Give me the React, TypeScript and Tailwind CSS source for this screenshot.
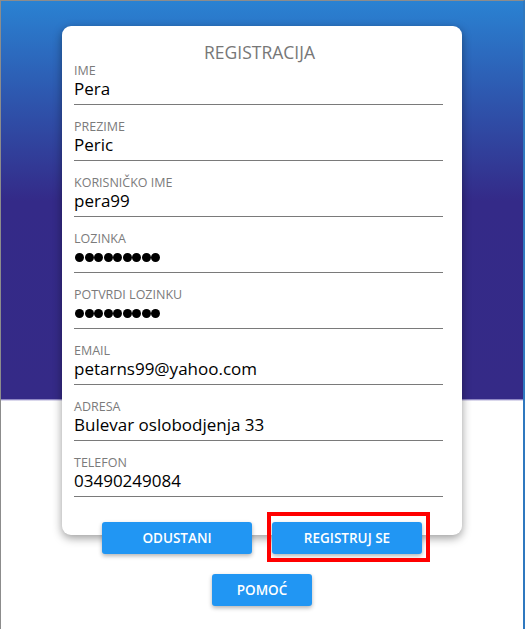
import React from 'react';

interface Field {
  label: string;
  value: string;
  password?: boolean;
}

const fields: Field[] = [
  { label: 'IME', value: 'Pera' },
  { label: 'PREZIME', value: 'Peric' },
  { label: 'KORISNIČKO IME', value: 'pera99' },
  { label: 'LOZINKA', value: '12345678', password: true },
  { label: 'POTVRDI LOZINKU', value: '12345678', password: true },
  { label: 'EMAIL', value: 'petarns99@yahoo.com' },
  { label: 'ADRESA', value: 'Bulevar oslobodjenja 33' },
  { label: 'TELEFON', value: '03490249084' },
];

function FormField({ field }: { field: Field }) {
  return (
    <div className="mt-[15px] first:mt-0 border-b border-[#7a7a7a] pb-[4px]">
      <div className="h-[14px] text-[12.5px] leading-[14px] text-[#7b7b7b]">{field.label}</div>
      <div className="h-[22px] text-[17px] leading-[22px] text-black">
        {field.password ? (
          <div className="flex items-center h-full gap-[0.5px] pl-[1px]">
            {Array.from({ length: 9 }).map((_, i) => (
              <span key={i} className="w-[9px] h-[9px] rounded-full bg-black" />
            ))}
          </div>
        ) : (
          field.value
        )}
      </div>
    </div>
  );
}

export default function App() {
  return (
    <div
      className="min-h-[629px] w-[525px] border-t border-l border-[#8c8c8c] border-r-2 border-r-[#2f78bf] bg-[linear-gradient(180deg,#2a82d2_0px,#2e55ad_100px,#342a88_200px,#352a87_398px,#6a5fb0_398px,#ffffff_400px)] font-['Open_Sans',sans-serif]"
    >
      <div className="mx-auto mt-[25px] w-[400px] rounded-[9px] bg-white pl-[12px] pr-[19px] pt-[15px] pb-[38px] shadow-[0_3px_10px_rgba(0,0,0,0.4)]">
        <h1 className="text-center text-[17.5px] leading-[22px] text-[#777777] pl-[2px]">REGISTRACIJA</h1>
        <div className="mt-[1px]">
          {fields.map((f) => (
            <FormField key={f.label} field={f} />
          ))}
        </div>
      </div>

      <div className="mt-[-13px] flex justify-center gap-[20px]">
        <button className="w-[150px] h-[32px] rounded-[3px] bg-[#2196f3] text-white text-[13.5px] font-semibold shadow-[0_2px_4px_rgba(0,0,0,0.3)]">
          ODUSTANI
        </button>
        <div className="relative">
          <button className="w-[150px] h-[32px] rounded-[3px] bg-[#2196f3] text-white text-[13.5px] font-semibold shadow-[0_2px_4px_rgba(0,0,0,0.3)]">
            REGISTRUJ SE
          </button>
          <div className="absolute left-[-5px] top-[-10px] w-[163px] h-[50px] border-4 border-[#ff0000] pointer-events-none" />
        </div>
      </div>

      <div className="mt-[20px] flex justify-center">
        <button className="w-[100px] h-[32px] rounded-[3px] bg-[#2196f3] text-white text-[13.5px] font-semibold shadow-[0_2px_4px_rgba(0,0,0,0.3)]">
          POMOĆ
        </button>
      </div>
    </div>
  );
}
